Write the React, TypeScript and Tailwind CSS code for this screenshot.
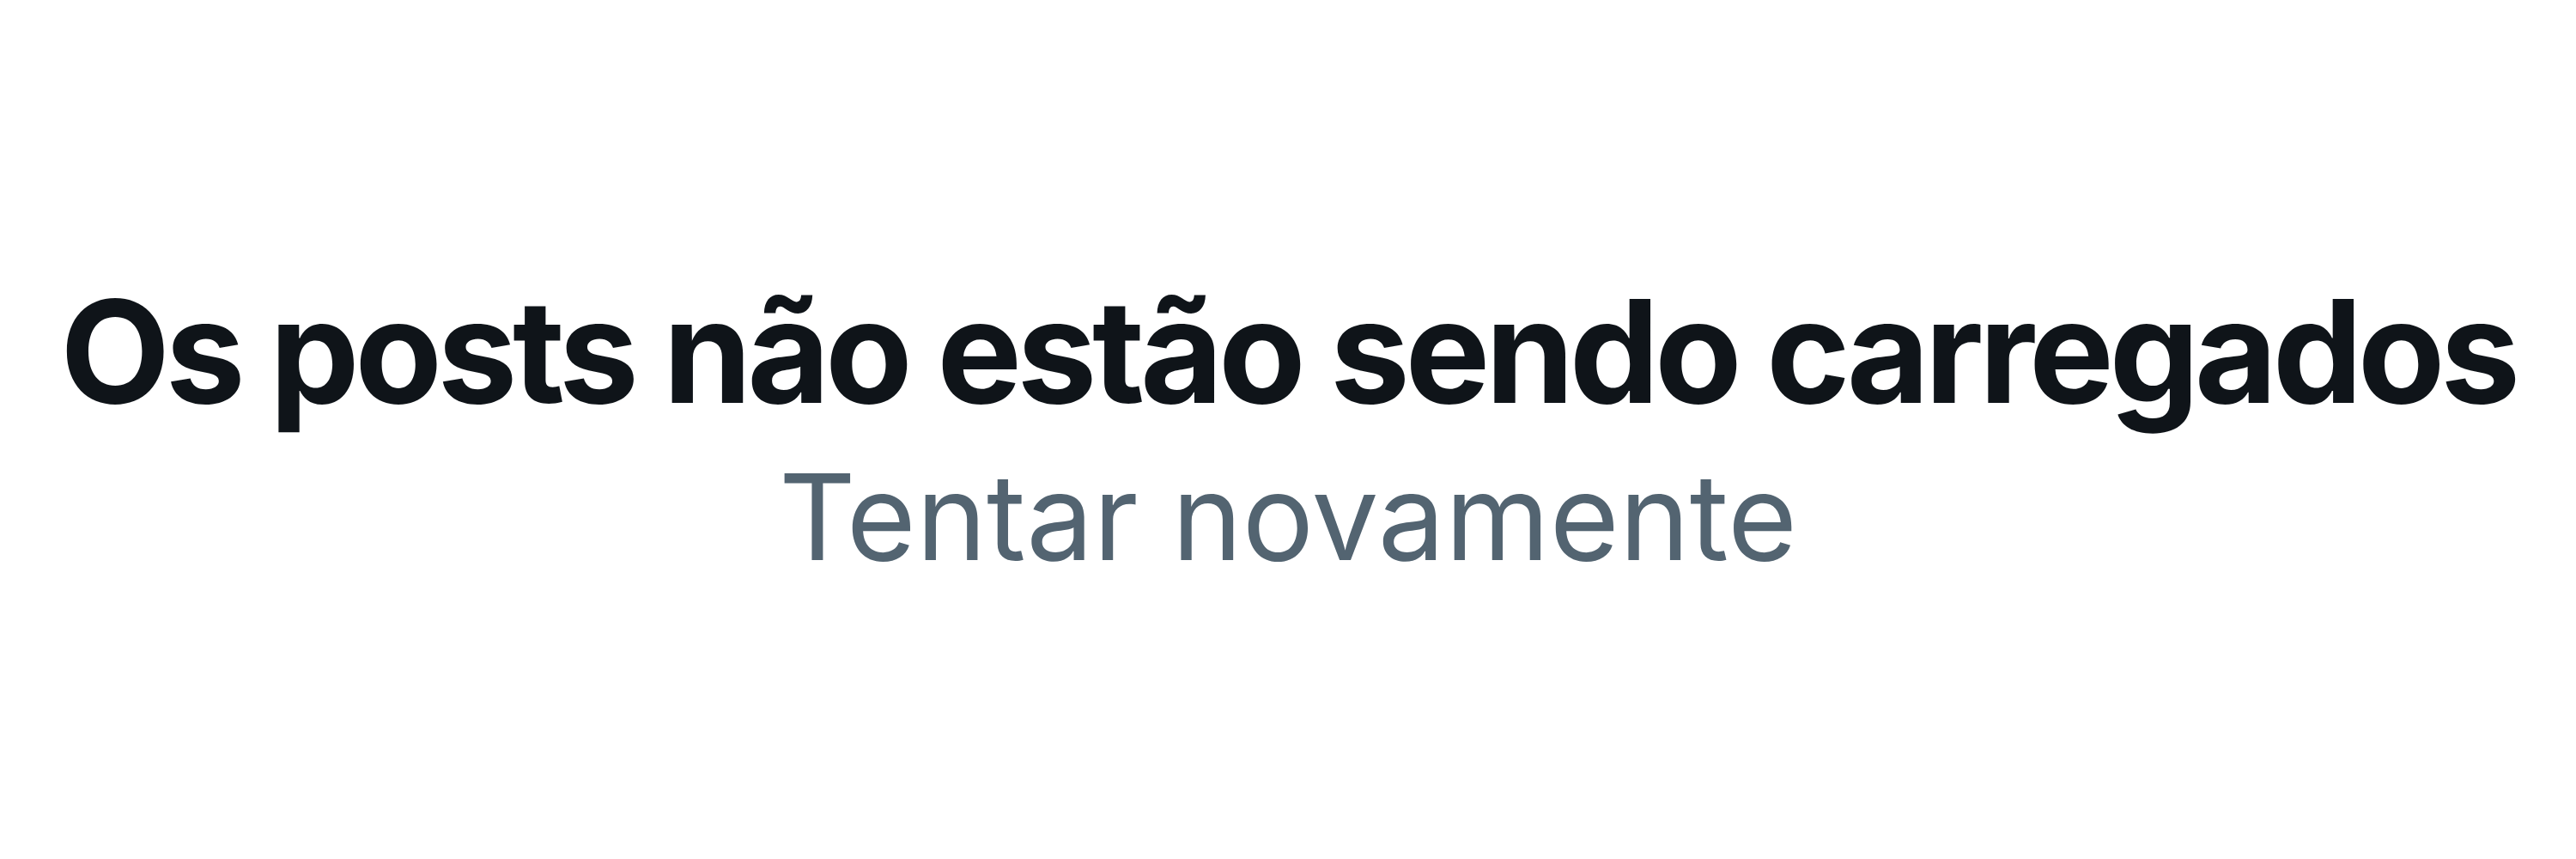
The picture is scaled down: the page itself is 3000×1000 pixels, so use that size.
export default function App() {
  return (
    <div className="flex h-[1000px] w-[3000px] items-center justify-center bg-white font-['Inter',sans-serif]">
      <div className="flex flex-col items-center pt-[11px]">
        <h2 className="text-[166px] font-bold leading-[180px] tracking-[-5.5px] text-[#0f1419]">
          Os posts não estão sendo carregados
        </h2>
        <button className="mt-[13px] text-[139px] font-normal leading-[180px] text-[#536471]">
          Tentar novamente
        </button>
      </div>
    </div>
  );
}
